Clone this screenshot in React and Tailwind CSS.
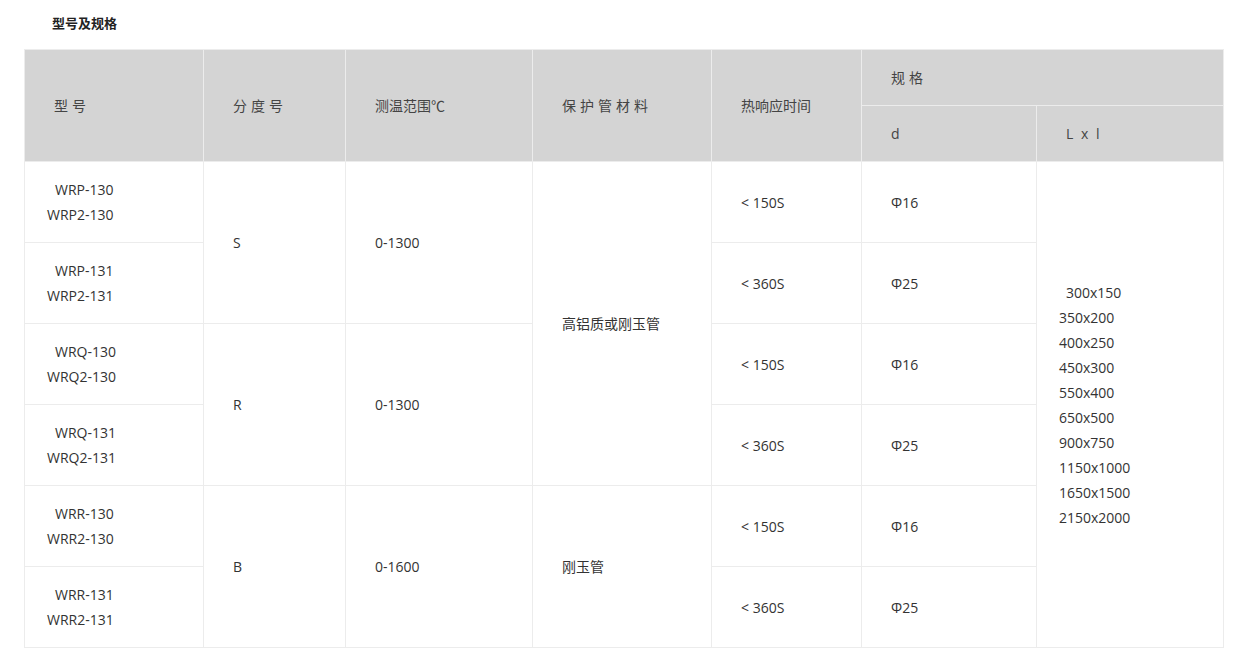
export default function App() {
  const font = { fontFamily: '"Open Sans", "Noto Sans CJK SC", sans-serif' };
  const b = "border border-[#ececec]";
  const models = [
    ["WRP-130", "WRP2-130"], ["WRP-131", "WRP2-131"],
    ["WRQ-130", "WRQ2-130"], ["WRQ-131", "WRQ2-131"],
    ["WRR-130", "WRR2-130"], ["WRR-131", "WRR2-131"],
  ];
  const grades = [["S", "0-1300"], ["R", "0-1300"], ["B", "0-1600"]];
  const sizes = ["300x150", "350x200", "400x250", "450x300", "550x400", "650x500", "900x750", "1150x1000", "1650x1500", "2150x2000"];
  return (
    <div className="bg-white w-[1236px] h-[667px] text-[14px] text-[#333] leading-[25px]" style={font}>
      <div className="pl-[52px] pt-[11px] h-[49px] text-[13px] font-bold text-[#222]">型号及规格</div>
      <table className="ml-[24px] border-collapse table-fixed w-[1199px]">
        <colgroup>
          <col className="w-[179px]" /><col className="w-[142px]" /><col className="w-[187px]" />
          <col className="w-[179px]" /><col className="w-[150px]" /><col className="w-[175px]" /><col className="w-[187px]" />
        </colgroup>
        <thead className="bg-[#d4d4d4] text-[#444]">
          <tr className="h-[56px]">
            <th rowSpan={2} className={`${b} font-normal text-left pl-[29px] tracking-[4px]`}>型号</th>
            <th rowSpan={2} className={`${b} font-normal text-left pl-[29px] tracking-[4px]`}>分度号</th>
            <th rowSpan={2} className={`${b} font-normal text-left pl-[29px]`}>测温范围℃</th>
            <th rowSpan={2} className={`${b} font-normal text-left pl-[29px] tracking-[4px]`}>保护管材料</th>
            <th rowSpan={2} className={`${b} font-normal text-left pl-[29px]`}>热响应时间</th>
            <th colSpan={2} className={`${b} font-normal text-left pl-[29px] tracking-[4px]`}>规格</th>
          </tr>
          <tr className="h-[56px]">
            <th className={`${b} font-normal text-left pl-[29px]`}>d</th>
            <th className={`${b} font-normal text-left pl-[29px] tracking-[2px]`}>L x l</th>
          </tr>
        </thead>
        <tbody>
          {models.map((m, i) => (
            <tr key={i} className="h-[81px]">
              <td className={`${b} pl-[22px]`}>
                <div className="pl-[8px]">{m[0]}</div>
                <div>{m[1]}</div>
              </td>
              {i % 2 === 0 && (
                <>
                  <td rowSpan={2} className={`${b} pl-[29px]`}>{grades[i / 2][0]}</td>
                  <td rowSpan={2} className={`${b} pl-[29px]`}>{grades[i / 2][1]}</td>
                </>
              )}
              {i === 0 && <td rowSpan={4} className={`${b} pl-[29px]`}>高铝质或刚玉管</td>}
              {i === 4 && <td rowSpan={2} className={`${b} pl-[29px]`}>刚玉管</td>}
              <td className={`${b} pl-[29px]`}>&lt; {i % 2 === 0 ? "150S" : "360S"}</td>
              <td className={`${b} pl-[29px]`}>{i % 2 === 0 ? "Φ16" : "Φ25"}</td>
              {i === 0 && (
                <td rowSpan={6} className={`${b} pl-[22px]`}>
                  {sizes.map((s, k) => (
                    <div key={k} className={k === 0 ? "pl-[7px]" : ""}>{s}</div>
                  ))}
                </td>
              )}
            </tr>
          ))}
        </tbody>
      </table>
    </div>
  );
}
